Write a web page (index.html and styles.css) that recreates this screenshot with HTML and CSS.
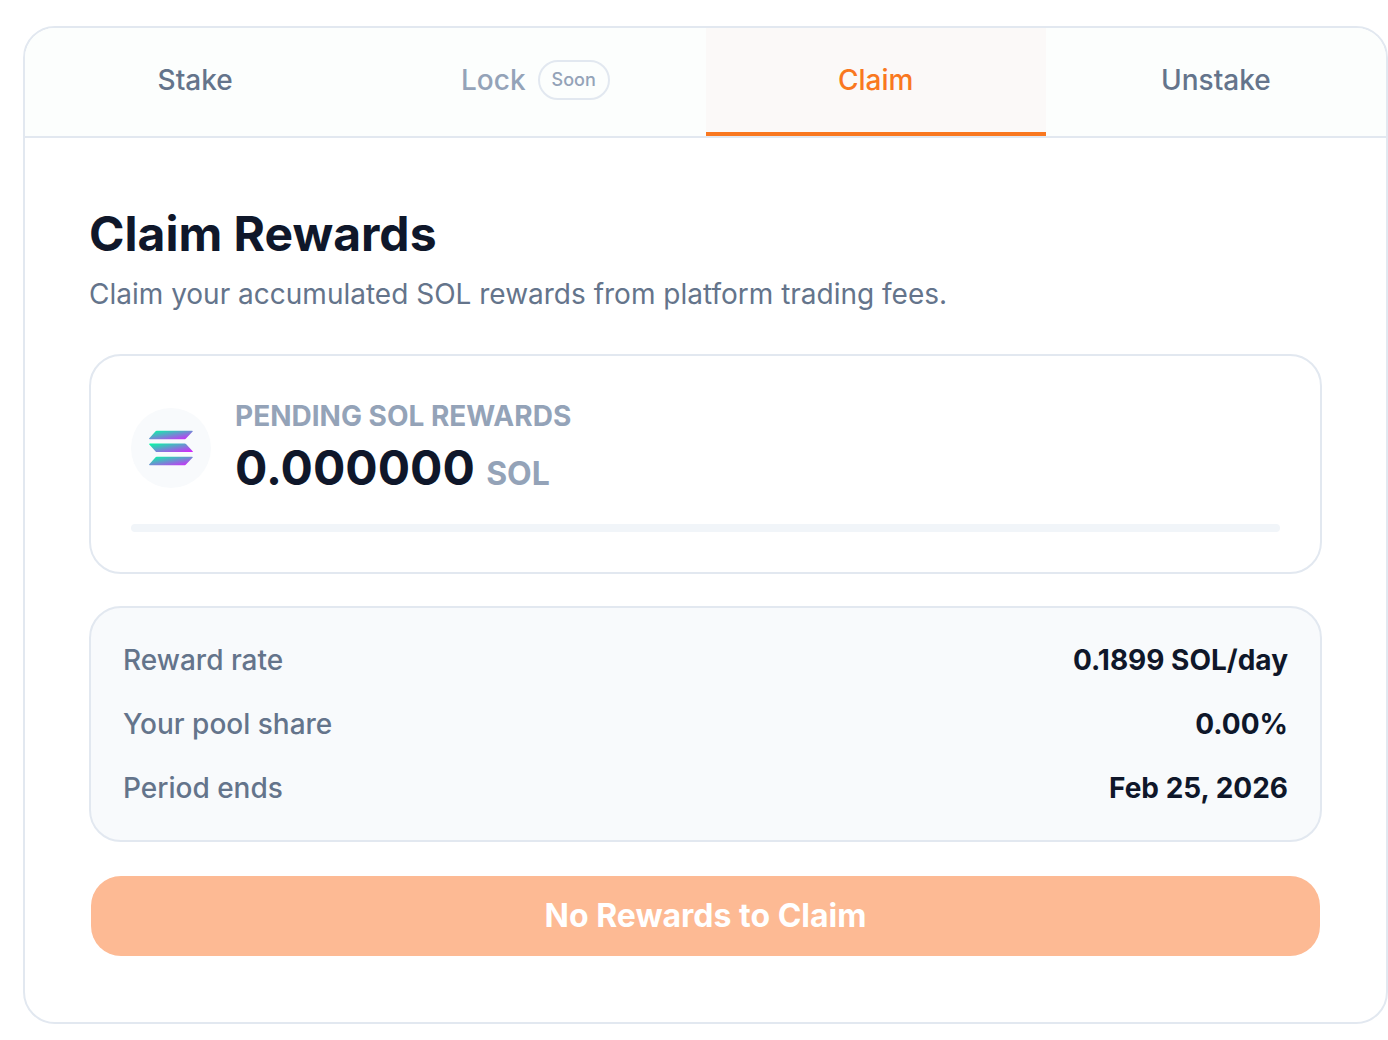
FILE: index.html
```html
<!DOCTYPE html>
<html lang="en">
<head>
<meta charset="utf-8">
<meta name="viewport" content="width=device-width, initial-scale=1">
<title>Claim Rewards</title>
<link rel="stylesheet" href="styles.css">
</head>
<body>
<main class="card">
  <div class="tabs" role="tablist">
    <button class="tab" type="button" role="tab" aria-selected="false">Stake</button>
    <button class="tab tab-locked" type="button" role="tab" aria-selected="false" disabled>Lock <span class="badge">Soon</span></button>
    <button class="tab tab-active" type="button" role="tab" aria-selected="true">Claim</button>
    <button class="tab" type="button" role="tab" aria-selected="false">Unstake</button>
  </div>
  <div class="content">
    <header>
      <h1 class="title">Claim Rewards</h1>
      <p class="subtitle">Claim your accumulated SOL rewards from platform trading fees.</p>
    </header>
    <div class="panels">
      <section class="pending">
        <div class="pending-row">
          <span class="coin">
            <svg class="coin-logo" viewBox="0 0 44 36" aria-hidden="true">
              <defs>
                <linearGradient id="sol" x1="0" y1="0" x2="1" y2="1">
                  <stop offset="0" stop-color="#00ffa3"/>
                  <stop offset="1" stop-color="#dc1fff"/>
                </linearGradient>
              </defs>
              <path fill="url(#sol)" d="M7.6 .8H43.2q1 0 .5 .8L37 8.6q-.5 .6-1.2 .6H.8q-1.2 0-.5-1L6.6 1.3q.5-.5 1-.5z"/>
              <path fill="url(#sol)" d="M.8 13.6H35.8q.7 0 1.2 .5L43.7 21.2q.5 .8-.5 .8H7.6q-.6 0-1-.5L.3 14.6q-.6-1 .5-1z"/>
              <path fill="url(#sol)" d="M7.6 26.8H43.2q1 0 .5 .8L37 34.6q-.5 .6-1.2 .6H.8q-1.2 0-.5-1L6.6 27.3q.5-.5 1-.5z"/>
            </svg>
          </span>
          <div>
            <div class="label">PENDING SOL REWARDS</div>
            <div class="amount">0.000000 <span class="unit">SOL</span></div>
          </div>
        </div>
        <div class="bar"></div>
      </section>
      <dl class="stats">
        <div class="stat"><dt>Reward rate</dt><dd>0.1899 SOL/day</dd></div>
        <div class="stat"><dt>Your pool share</dt><dd>0.00%</dd></div>
        <div class="stat"><dt>Period ends</dt><dd>Feb 25, 2026</dd></div>
      </dl>
      <button class="claim" type="button" disabled>No Rewards to Claim</button>
    </div>
  </div>
</main>
</body>
</html>
```
FILE: styles.css
```css
*, *::before, *::after { box-sizing: border-box; }

body {
  margin: 0;
  padding: 26px 0 16px 23px;
  background: #fff;
  color: #0f172a;
  font-family: Inter, "Liberation Sans", sans-serif;
  font-size: 28px;
  line-height: 40px;
}

h1, p, dl, dd { margin: 0; }

button {
  margin: 0;
  font: inherit;
}

.card {
  border: 2px solid #e2e8f0;
  border-radius: 32px;
  overflow: hidden;
}

.tabs {
  display: grid;
  grid-template-columns: repeat(4, 1fr);
  border-bottom: 2px solid #e2e8f0;
  background: #fcfefd;
}

.tab {
  display: flex;
  align-items: center;
  justify-content: center;
  gap: 12px;
  padding: 32px 0;
  border: 0;
  border-bottom: 4px solid transparent;
  background: none;
  color: #64748b;
  font-weight: 500;
}

.tab-locked { color: #94a3b8; }

.tab-active {
  border-color: #f97820;
  background: #fbf9f8;
  color: #f97820;
}

.badge {
  padding: 0 12px;
  border: 2px solid #e2e8f0;
  border-radius: 20px;
  font-size: 18px;
  line-height: 36px;
}

.content { padding: 64px; }

.title {
  font-size: 48px;
  font-weight: 700;
  line-height: 64px;
}

.subtitle {
  margin-top: 8px;
  color: #64748b;
}

.panels {
  display: flex;
  flex-direction: column;
  gap: 32px;
  margin-top: 40px;
}

.pending {
  padding: 40px;
  border: 2px solid #e2e8f0;
  border-radius: 32px;
}

.pending-row {
  display: flex;
  align-items: center;
  gap: 24px;
}

.coin {
  display: grid;
  place-items: center;
  width: 80px;
  height: 80px;
  border-radius: 50%;
  background: #f8fafc;
}

.coin-logo {
  width: 44px;
  height: 36px;
}

.label {
  color: #94a3b8;
  font-weight: 700;
}

.amount {
  font-size: 48px;
  font-weight: 700;
  line-height: 64px;
}

.unit {
  color: #94a3b8;
  font-size: 32px;
  line-height: 40px;
}

.bar {
  height: 8px;
  margin-top: 24px;
  border-radius: 4px;
  background: #f1f5f9;
}

.stats {
  display: grid;
  gap: 24px;
  padding: 32px;
  border: 2px solid #e2e8f0;
  border-radius: 32px;
  background: #f8fafc;
}

.stat {
  display: flex;
  justify-content: space-between;
}

.stat dt {
  color: #64748b;
  font-weight: 500;
}

.stat dd { font-weight: 700; }

.claim {
  padding: 20px;
  border: 2px solid transparent;
  border-radius: 32px;
  background: #fdba94;
  background-clip: padding-box;
  color: #fff;
  font-size: 32px;
  font-weight: 700;
}
```
